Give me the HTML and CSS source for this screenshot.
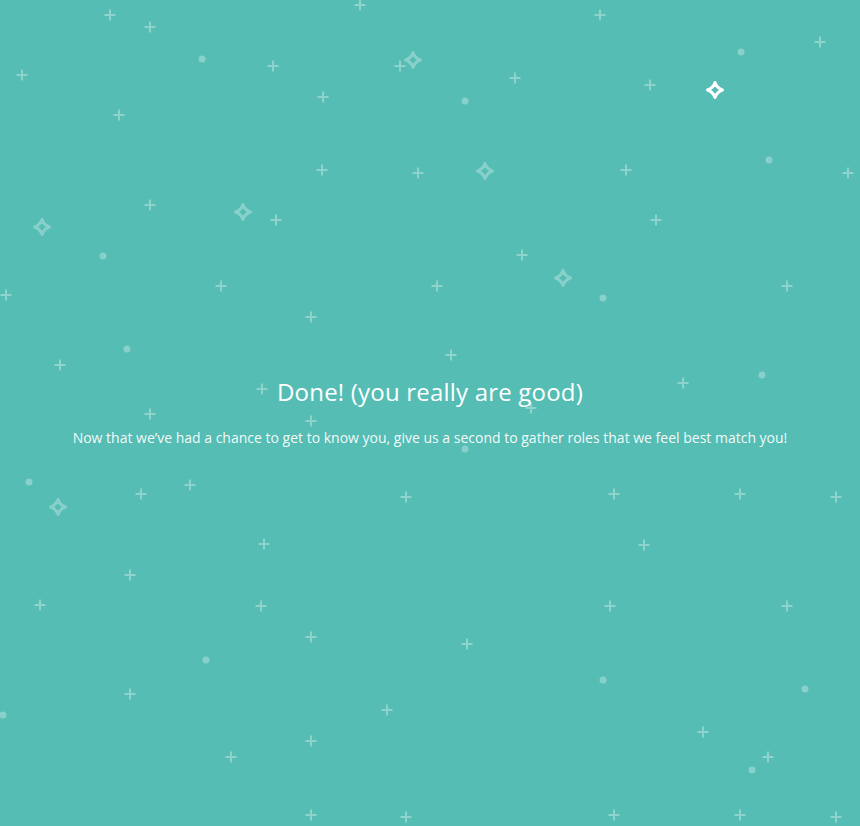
FILE: index.html
```html
<!DOCTYPE html>
<html>
<head>
<meta charset="utf-8">
<link rel="stylesheet" href="styles.css">
</head>
<body>
<div class="page">
  <svg class="sky" width="860" height="826" viewBox="0 0 860 826" aria-hidden="true">
    <defs>
      <path id="p" d="M-5.5,0H5.5M0,-5.5V5.5" />
      <path id="s" d="M0,-7.5 Q1.8,-1.8 7.5,0 Q1.8,1.8 0,7.5 Q-1.8,1.8 -7.5,0 Q-1.8,-1.8 0,-7.5Z" />
    </defs>
    <g class="pluses">
      <use href="#p" x="110" y="15"/><use href="#p" x="150" y="27"/><use href="#p" x="360" y="5"/>
      <use href="#p" x="600" y="15"/><use href="#p" x="820" y="42"/><use href="#p" x="22" y="75"/>
      <use href="#p" x="273" y="66"/><use href="#p" x="400" y="66"/><use href="#p" x="515" y="78"/>
      <use href="#p" x="650" y="85"/><use href="#p" x="323" y="97"/><use href="#p" x="119" y="115"/>
      <use href="#p" x="322" y="170"/><use href="#p" x="418" y="173"/><use href="#p" x="626" y="170"/>
      <use href="#p" x="848" y="173"/><use href="#p" x="150" y="205"/><use href="#p" x="276" y="220"/>
      <use href="#p" x="656" y="220"/><use href="#p" x="522" y="255"/><use href="#p" x="6" y="295"/>
      <use href="#p" x="221" y="286"/><use href="#p" x="437" y="286"/><use href="#p" x="787" y="286"/>
      <use href="#p" x="311" y="317"/><use href="#p" x="451" y="355"/><use href="#p" x="60" y="365"/>
      <use href="#p" x="683" y="383"/><use href="#p" x="262" y="389"/><use href="#p" x="150" y="414"/>
      <use href="#p" x="311" y="421"/><use href="#p" x="531" y="408"/><use href="#p" x="190" y="485"/>
      <use href="#p" x="141" y="494"/><use href="#p" x="406" y="497"/><use href="#p" x="614" y="494"/>
      <use href="#p" x="740" y="494"/><use href="#p" x="836" y="497"/><use href="#p" x="644" y="545"/>
      <use href="#p" x="264" y="544"/><use href="#p" x="130" y="575"/><use href="#p" x="40" y="605"/>
      <use href="#p" x="261" y="606"/><use href="#p" x="610" y="606"/><use href="#p" x="787" y="606"/>
      <use href="#p" x="311" y="637"/><use href="#p" x="467" y="644"/><use href="#p" x="130" y="694"/>
      <use href="#p" x="387" y="710"/><use href="#p" x="703" y="732"/><use href="#p" x="311" y="741"/>
      <use href="#p" x="231" y="757"/><use href="#p" x="768" y="757"/><use href="#p" x="311" y="815"/>
      <use href="#p" x="406" y="817"/><use href="#p" x="614" y="815"/><use href="#p" x="740" y="815"/>
      <use href="#p" x="836" y="817"/>
    </g>
    <g class="dots">
      <circle cx="202" cy="59" r="3.5"/><circle cx="741" cy="52" r="3.5"/><circle cx="465" cy="101" r="3.5"/>
      <circle cx="769" cy="160" r="3.5"/><circle cx="103" cy="256" r="3.5"/><circle cx="603" cy="298" r="3.5"/>
      <circle cx="127" cy="349" r="3.5"/><circle cx="762" cy="375" r="3.5"/><circle cx="465" cy="449" r="3.5"/>
      <circle cx="29" cy="482" r="3.5"/><circle cx="206" cy="660" r="3.5"/><circle cx="603" cy="680" r="3.5"/>
      <circle cx="805" cy="689" r="3.5"/><circle cx="3" cy="715" r="3.5"/><circle cx="752" cy="770" r="3.5"/>
    </g>
    <g class="sparks">
      <use href="#s" x="413" y="60"/><use href="#s" x="485" y="171"/><use href="#s" x="243" y="212"/>
      <use href="#s" x="42" y="227"/><use href="#s" x="563" y="278"/><use href="#s" x="58" y="507"/>
    </g>
    <g class="spark-bright">
      <use href="#s" x="715" y="90"/>
    </g>
  </svg>
  <main class="content">
    <h1 class="title">Done! (you really are good)</h1>
    <p class="lead">Now that we’ve had a chance to get to know you, give us a second to gather roles that we feel best match you!</p>
  </main>
</div>
</body>
</html>
```
FILE: styles.css
```css
html, body {
  margin: 0;
  padding: 0;
  background: #55bdb4;
}
.page {
  position: relative;
  width: 860px;
  height: 826px;
  overflow: hidden;
  background: #55bdb4;
}
.sky {
  position: absolute;
  left: 0;
  top: 0;
}
.pluses {
  stroke: rgba(255, 255, 255, 0.34);
  stroke-width: 2;
  fill: none;
}
.dots {
  fill: rgba(255, 255, 255, 0.3);
}
.sparks {
  stroke: rgba(255, 255, 255, 0.3);
  stroke-width: 3;
  stroke-linejoin: round;
  fill: none;
}
.spark-bright {
  stroke: #ffffff;
  stroke-width: 3;
  stroke-linejoin: round;
  fill: none;
}
.content {
  position: relative;
  display: flex;
  flex-direction: column;
  align-items: center;
  padding-top: 375px;
  color: #ffffff;
  text-align: center;
}
.title {
  margin: 0;
  font-family: "Open Sans", "DejaVu Sans", sans-serif;
  font-weight: 400;
  font-size: 24px;
  line-height: 34px;
  letter-spacing: 0.2px;
}
.lead {
  margin: 19px 0 0;
  font-family: "Open Sans", sans-serif;
  font-size: 14px;
  line-height: 20px;
  color: rgba(255, 255, 255, 0.95);
}
```
